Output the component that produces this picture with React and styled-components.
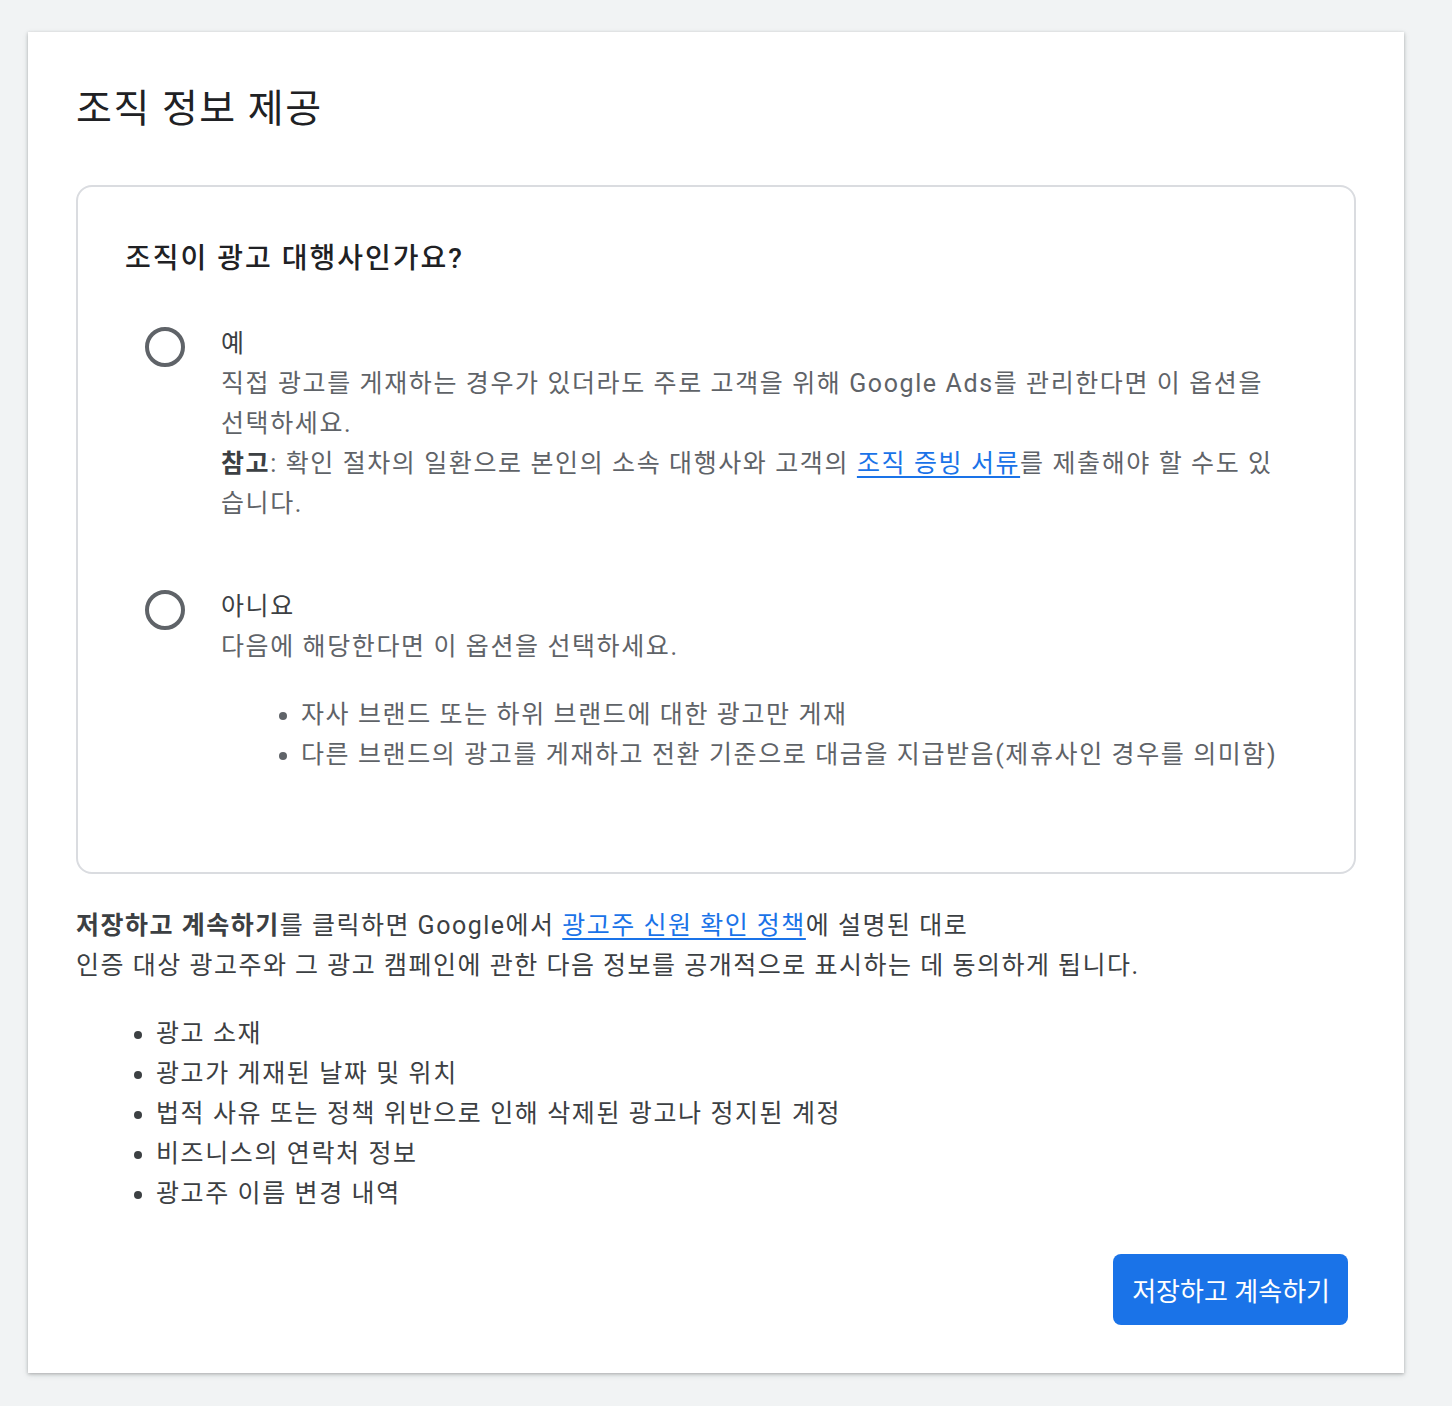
import React from "react";
import styled, { createGlobalStyle } from "styled-components";

const GlobalStyle = createGlobalStyle`
  html, body {
    margin: 0;
    padding: 0;
    background: #f1f3f4;
  }
  body {
    font-family: Roboto, "Noto Sans CJK KR", sans-serif;
    color: #3c4043;
    -webkit-font-smoothing: antialiased;
  }
`;

const Page = styled.div`
  padding: 32px 48px 33px 28px;
`;

const Card = styled.div`
  width: 1376px;
  box-sizing: border-box;
  background: #fff;
  padding: 51px 48px 48px;
  box-shadow: 0 1px 3px rgba(60, 64, 67, 0.3), 0 2px 6px rgba(60, 64, 67, 0.15);
  display: flex;
  flex-direction: column;
`;

const Title = styled.h1`
  margin: 0;
  font-size: 39px;
  line-height: 52px;
  letter-spacing: 1.5px;
  font-weight: 400;
  color: #202124;
`;

const Box = styled.div`
  margin-top: 50px;
  border: 2px solid #dadce0;
  border-radius: 16px;
  padding: 47px 47px 97px 47px;
`;

const Question = styled.h2`
  margin: 0 0 40px;
  font-size: 28px;
  line-height: 50px;
  letter-spacing: 2px;
  font-weight: 500;
  color: #202124;
`;

const Option = styled.div`
  display: flex;
  align-items: flex-start;
  gap: 16px;
  & + & {
    margin-top: 63px;
  }
`;

const RadioWrap = styled.div`
  width: 80px;
  flex: none;
  display: flex;
  justify-content: center;
  padding-top: 3px;
`;

const Radio = styled.span`
  width: 40px;
  height: 40px;
  box-sizing: border-box;
  border: 4px solid #5f6368;
  border-radius: 50%;
`;

const OptionBody = styled.div`
  width: 1063px;
  font-size: 25px;
  line-height: 40px;
  letter-spacing: 1.6px;
`;

const Label = styled.div`
  color: #3c4043;
`;

const Desc = styled.div`
  color: #5f6368;
`;

const Strong = styled.b`
  font-weight: 700;
  color: #3c4043;
`;

const Link = styled.a`
  color: #1a73e8;
  text-decoration: underline;
  text-underline-offset: 4px;
`;

const List = styled.ul`
  margin: 28px 0 0;
  padding-left: 80px;
  font-size: 25px;
  line-height: 40px;
  letter-spacing: 1.6px;
  color: ${(p) => p.$color || "#3c4043"};
`;

const Notice = styled.p`
  margin: 32px 0 0;
  font-size: 25px;
  line-height: 40px;
  letter-spacing: 1.5px;
  color: #3c4043;
`;

const Footer = styled.div`
  display: flex;
  justify-content: flex-end;
  margin-top: 40px;
  padding-right: 8px;
`;

const Button = styled.button`
  height: 71px;
  padding: 0 18px 0 19px;
  border: none;
  border-radius: 8px;
  background: #1a73e8;
  color: #fff;
  font-family: Roboto, "Noto Sans CJK KR", sans-serif;
  font-size: 26px;
  cursor: pointer;
`;

export default function App() {
  return (
    <>
      <GlobalStyle />
      <Page>
        <Card>
          <Title>조직 정보 제공</Title>
          <Box>
            <Question>조직이 광고 대행사인가요?</Question>
            <Option>
              <RadioWrap>
                <Radio />
              </RadioWrap>
              <OptionBody>
                <Label>예</Label>
                <Desc>
                  직접 광고를 게재하는 경우가 있더라도 주로 고객을 위해 Google Ads를 관리한다면 이 옵션을 선택하세요.
                </Desc>
                <Desc>
                  <Strong>참고</Strong>: 확인 절차의 일환으로 본인의 소속 대행사와 고객의{" "}
                  <Link href="#">조직 증빙 서류</Link>를 제출해야 할 수도 있습니다.
                </Desc>
              </OptionBody>
            </Option>
            <Option>
              <RadioWrap>
                <Radio />
              </RadioWrap>
              <OptionBody>
                <Label>아니요</Label>
                <Desc>다음에 해당한다면 이 옵션을 선택하세요.</Desc>
                <List $color="#5f6368">
                  <li>자사 브랜드 또는 하위 브랜드에 대한 광고만 게재</li>
                  <li>다른 브랜드의 광고를 게재하고 전환 기준으로 대금을 지급받음(제휴사인 경우를 의미함)</li>
                </List>
              </OptionBody>
            </Option>
          </Box>
          <Notice>
            <Strong>저장하고 계속하기</Strong>를 클릭하면 Google에서{" "}
            <Link href="#">광고주 신원 확인 정책</Link>에 설명된 대로
            <br />
            인증 대상 광고주와 그 광고 캠페인에 관한 다음 정보를 공개적으로 표시하는 데 동의하게 됩니다.
          </Notice>
          <List>
            <li>광고 소재</li>
            <li>광고가 게재된 날짜 및 위치</li>
            <li>법적 사유 또는 정책 위반으로 인해 삭제된 광고나 정지된 계정</li>
            <li>비즈니스의 연락처 정보</li>
            <li>광고주 이름 변경 내역</li>
          </List>
          <Footer>
            <Button>저장하고 계속하기</Button>
          </Footer>
        </Card>
      </Page>
    </>
  );
}
